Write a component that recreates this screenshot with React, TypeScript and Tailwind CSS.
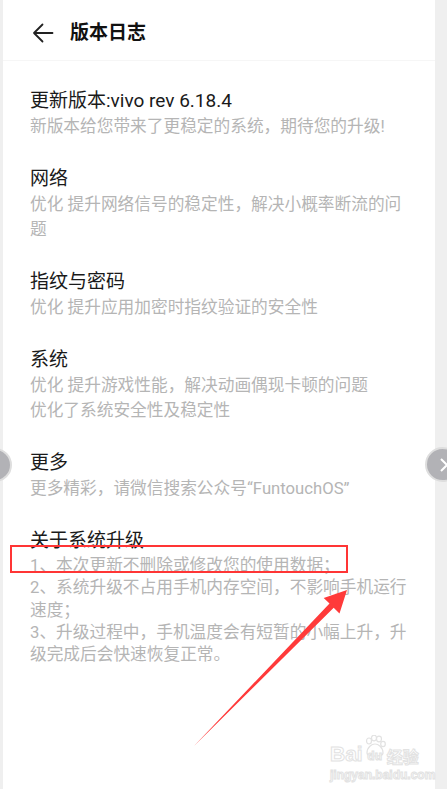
import React from "react";

const font = { fontFamily: 'Roboto, "Noto Sans CJK SC", sans-serif' };

type Sec = { title: string; lines: string[] };

const sections: Sec[] = [
  { title: "更新版本:vivo rev 6.18.4", lines: ["新版本给您带来了更稳定的系统，期待您的升级!"] },
  { title: "网络", lines: ["优化 提升网络信号的稳定性，解决小概率断流的问题"] },
  { title: "指纹与密码", lines: ["优化 提升应用加密时指纹验证的安全性"] },
  { title: "系统", lines: ["优化 提升游戏性能，解决动画偶现卡顿的问题", "优化了系统安全性及稳定性"] },
  { title: "更多", lines: ["更多精彩，请微信搜索公众号“FuntouchOS”"] },
];

export default function App() {
  return (
    <div className="relative w-[447px] h-[789px] bg-[#efefef] flex overflow-hidden" style={font}>
      <div className="ml-[3px] w-[432px] h-full bg-white flex flex-col">
        <div className="h-[61px] pt-[5px] flex items-center border-b border-[#f6f6f6] pl-[28px]">
          <svg width="22" height="20" viewBox="0 0 22 20" className="ml-[1px]">
            <path d="M20.5 10H2M10.5 1.5L2 10l8.5 8.5" fill="none" stroke="#222" strokeWidth="1.8" strokeLinecap="round" strokeLinejoin="round" />
          </svg>
          <div className="ml-[16px] text-[19px] font-bold text-[#111] leading-none">版本日志</div>
        </div>
        <div className="pl-[27px] pr-[20px] pt-[27px] flex flex-col gap-[27px]">
          {sections.map((s) => (
            <div key={s.title} className="flex flex-col">
              <div className="text-[19px] leading-[26px] text-[#1a1a1a]">{s.title}</div>
              <div className="text-[16.7px] leading-[25px] text-[#b5b5b5]">
                {s.lines.map((l) => (
                  <div key={l}>{l}</div>
                ))}
              </div>
            </div>
          ))}
          <div className="flex flex-col">
            <div className="text-[19px] leading-[26px] text-[#1a1a1a]">关于系统升级</div>
            <div className="text-[16.7px] leading-[22.3px] text-[#b5b5b5] pt-[1px]">
              <div>1、本次更新不删除或修改您的使用数据；</div>
              <div>2、系统升级不占用手机内存空间，不影响手机运行速度；</div>
              <div>3、升级过程中，手机温度会有短暂的小幅上升，升级完成后会快速恢复正常。</div>
            </div>
          </div>
        </div>
      </div>

      {/* side nav circles */}
      <div className="absolute left-[-22px] top-[448px] w-[34px] h-[34px] rounded-full bg-[#b2b2b6] border-2 border-[#dedede]" />
      <div className="absolute left-[425px] top-[447px] w-[35px] h-[35px] rounded-full bg-[#b2b2b6] border-2 border-[#dedede] flex items-center pl-[12px]">
        <svg width="10" height="16" viewBox="0 0 10 16">
          <path d="M2 2l6 6-6 6" fill="none" stroke="#fff" strokeWidth="2" />
        </svg>
      </div>

      {/* red annotation box */}
      <div className="absolute left-[10px] top-[545px] w-[338px] h-[28px] border-[2.5px] border-[#ff3535]" />

      {/* red arrow */}
      <svg className="absolute left-0 top-0" width="447" height="789" viewBox="0 0 447 789">
        <polygon
          points="194,746 329.5,603.6 323.7,598 347,590 339.5,613.4 333.7,607.8"
          fill="#ff3a3a"
        />
      </svg>

      {/* watermark */}
      <div className="absolute left-[330px] top-[742px] flex flex-col items-start text-white [-webkit-text-stroke:1px_#e2e2e2]">
        <div className="flex items-end leading-none">
          <span className="text-[21px] font-bold" style={{ fontFamily: '"Liberation Sans", sans-serif' }}>Bai</span>
          <span className="relative mx-[1px] w-[22px] h-[22px] flex items-end justify-center">
            <svg width="22" height="22" viewBox="0 0 22 22" className="absolute left-0 top-[-7px]">
              <g fill="none" stroke="#e2e2e2" strokeWidth="1.2">
                <ellipse cx="5" cy="6" rx="2.5" ry="3" />
                <ellipse cx="10" cy="3" rx="2.5" ry="2.8" />
                <ellipse cx="15" cy="4" rx="2.5" ry="2.8" />
                <ellipse cx="19" cy="9" rx="2.3" ry="2.6" />
                <path d="M3 18c0-6 5-9 8-9s8 3 8 9c0 3-4 3-8 3s-8 0-8-3z" />
              </g>
            </svg>
            <span className="relative text-[12px] font-bold mb-[2px]" style={{ fontFamily: '"Liberation Sans", sans-serif' }}>du</span>
          </span>
          <span className="text-[16px] font-bold" style={{ fontFamily: '"Noto Sans CJK SC", sans-serif' }}>经验</span>
        </div>
        <div className="text-[12px] font-bold mt-[5px] leading-none" style={{ fontFamily: '"Liberation Sans", sans-serif' }}>jingyan.baidu.com</div>
      </div>
    </div>
  );
}
